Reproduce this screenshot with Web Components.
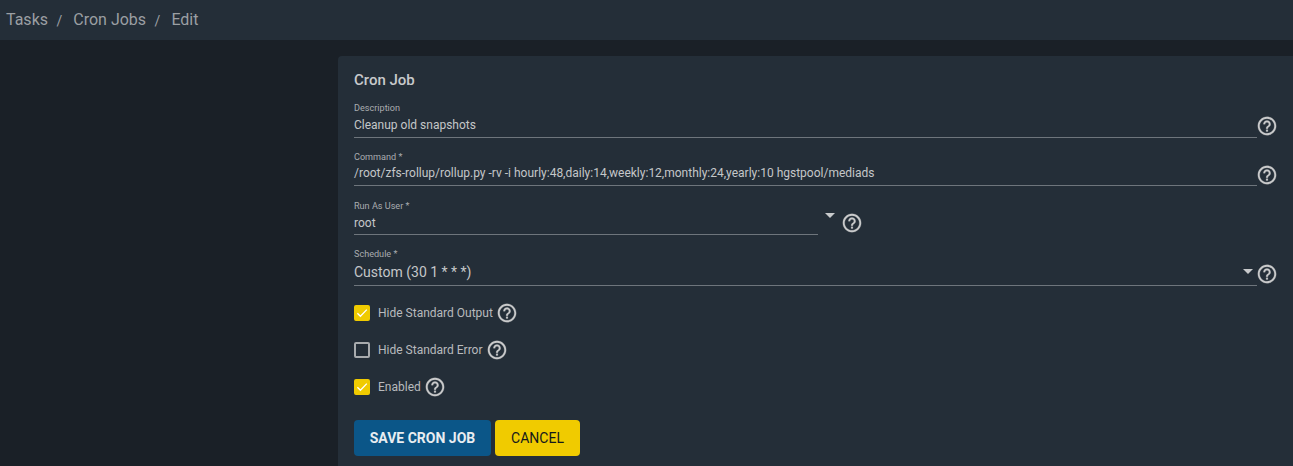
<!DOCTYPE html>
<html><head><meta charset="utf-8">
<style>
html,body{margin:0;padding:0;height:466px;overflow:hidden;background:#1a2027;font-family:Roboto,"Liberation Sans",sans-serif;}
</style></head><body>
<template id="help-t"><style>:host{display:inline-flex;width:20px;height:22px;flex:none;color:#c9cacb;justify-content:center}svg{width:22px;height:22px;fill:currentColor;stroke:currentColor;stroke-width:.25;display:block;flex:none}</style>
<svg viewBox="0 0 24 24"><path d="M11 18h2v-2h-2v2zm1-16C6.48 2 2 6.48 2 12s4.48 10 10 10 10-4.48 10-10S17.52 2 12 2zm0 18c-4.41 0-8-3.59-8-8s3.59-8 8-8 8 3.59 8 8-3.59 8-8 8zm0-14c-2.21 0-4 1.79-4 4h2c0-1.1.9-2 2-2s2 .9 2 2c0 2-3 1.75-3 5h2c0-2.25 3-2.5 3-5 0-2.21-1.79-4-4-4z"/></svg></template>

<template id="bar-t"><style>
:host{display:flex;align-items:center;height:40px;background:#242e38;padding:0 0 2px 6px;color:#9b9fa3;font-size:16px;box-sizing:border-box}
.s{margin:0 11px 0 8.5px;font-size:14px;padding-top:4px}
</style><span>Tasks</span><span class="s">/</span><span>Cron Jobs</span><span class="s">/</span><span>Edit</span></template>

<template id="card-t"><style>
:host{display:block;margin:16px 0 0 338px;height:410px;background:#242e38;border-radius:4px 0 0 0;padding:16px 16px 0;box-sizing:border-box;color:#d0d2d4}
h2{margin:0;font-size:15px;font-weight:500;line-height:16px;color:#c8cacc}
.btns{display:flex;gap:4px;margin-top:22px}
</style><h2>Cron Job</h2><slot></slot><div class="btns"><slot name="b"></slot></div></template>

<template id="field-t"><style>
:host{display:flex;align-items:flex-end;margin-top:var(--mt,0);}
.f{flex:var(--grow,1);width:var(--w,auto);min-width:0;border-bottom:1px solid #6e757c;position:relative;padding-bottom:var(--pb,2px)}
label{display:block;font-size:9.1px;line-height:11px;color:#a9acaf}
.v{font-size:var(--fs,12px);line-height:17px;margin-top:var(--lv,4px);color:#c4c7c9;white-space:nowrap}
.a{width:0;height:0;border-left:5px solid transparent;border-right:5px solid transparent;border-top:5px solid #c8cacc;position:absolute;}
x-help{margin-bottom:var(--hb,0)}
</style><div class="f"><label></label><div class="v"></div></div><slot></slot><x-help></x-help></template>

<template id="check-t"><style>
:host{display:flex;align-items:center;height:22px;margin-top:var(--mt,15px);font-size:12px;color:#b8babd}
.b{width:16px;height:16px;box-sizing:border-box;border:2px solid #a8abae;border-radius:2px;margin-right:8px;flex:none}
:host([checked]) .b{background:#f0cb00;border-color:#f0cb00}
svg{display:block;width:12px;height:12px}
x-help{margin-left:4px}
</style><span class="b"><svg viewBox="0 0 12 12" fill="none" stroke="#fff" stroke-width="1.3"><path d="M1.4 6.2l3 3L10.8 2.6"/></svg></span><slot></slot><x-help></x-help></template>

<template id="btn-t"><style>
:host{display:flex;align-items:center;justify-content:center;height:36px;border-radius:4px;font-size:14px;font-weight:500;box-sizing:border-box;background:var(--bg);color:var(--fg);width:var(--w)}
</style><slot></slot></template>

<x-bar></x-bar>
<x-card>
  <x-field style="--mt:15px;--lv:3px;--pb:3px;--hb:1px" label="Description" value="Cleanup old snapshots"></x-field>
  <x-field style="--mt:14px;--lv:2px;--pb:3px" label="Command *" value="/root/zfs-rollup/rollup.py -rv -i hourly:48,daily:14,weekly:12,monthly:24,yearly:10 hgstpool/mediads"></x-field>
  <x-field style="--mt:15px;--lv:3px;--pb:2px;--hb:1px;--grow:none;--w:464px" label="Run As User *" value="root" arrow="u"></x-field>
  <x-field style="--mt:14px;--lv:4px;--pb:4px;--hb:1px;--fs:14px" label="Schedule *" value="Custom (30 1 * * *)" arrow="s"></x-field>
  <x-check style="--mt:16px" checked>Hide Standard Output</x-check>
  <x-check>Hide Standard Error</x-check>
  <x-check checked>Enabled</x-check>
  <x-btn slot="b" style="--bg:#0b5688;--fg:#e8edf1;--w:137px;font-weight:700">SAVE CRON JOB</x-btn>
  <x-btn slot="b" style="--bg:#f0cb00;--fg:#15191c;--w:85px;font-weight:400">CANCEL</x-btn>
</x-card>
<script>
function mk(name,id,init){customElements.define(name,class extends HTMLElement{constructor(){super();this.attachShadow({mode:'open'}).appendChild(document.getElementById(id).content.cloneNode(true));}
connectedCallback(){init&&init.call(this,this.shadowRoot)}})}
mk('x-help','help-t');mk('x-bar','bar-t');mk('x-card','card-t');mk('x-btn','btn-t');
mk('x-check','check-t',function(r){if(!this.hasAttribute('checked'))r.querySelector('svg').style.display='none'});
mk('x-field','field-t',function(r){
 r.querySelector('label').textContent=this.getAttribute('label');
 r.querySelector('.v').textContent=this.getAttribute('value');
 const help=r.querySelector('x-help');
 const ar=this.getAttribute('arrow');
 if(ar){const a=document.createElement('div');a.className='a';
  if(ar==='u'){a.style.right='-17px';a.style.top='12px';help.style.marginLeft='24px';}
  else{a.style.right='4px';a.style.top='20px'}
  r.querySelector('.f').appendChild(a);}
});
</script>
</body></html>
